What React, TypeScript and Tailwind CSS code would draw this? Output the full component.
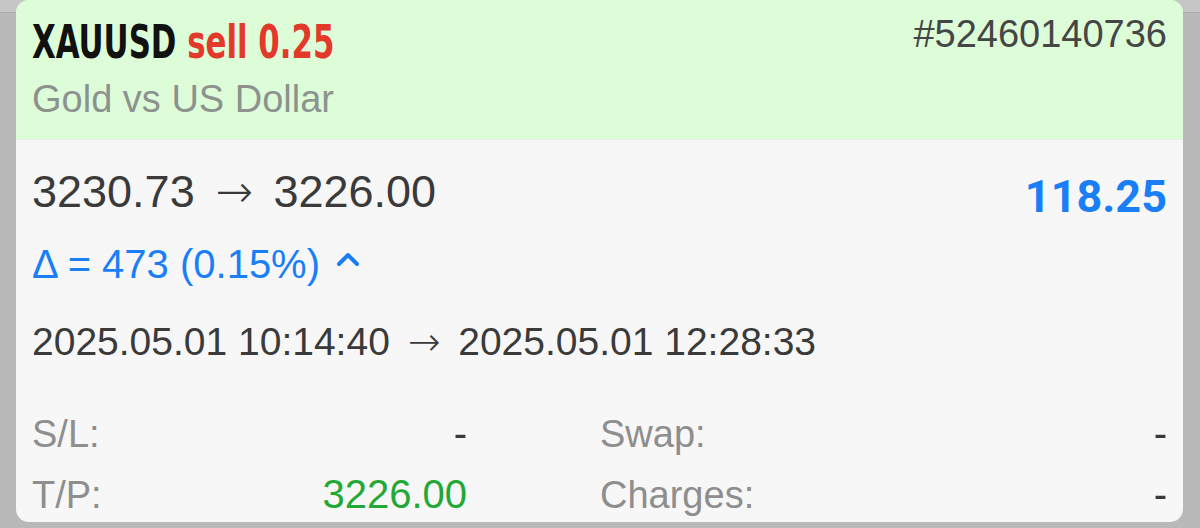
import { Fragment } from "react";

const sans = "font-['Liberation_Sans',Arial,sans-serif]";

const details = [
  [
    { label: "S/L:", value: "-", color: "text-[#3a3a3a]" },
    { label: "Swap:", value: "-", color: "text-[#3a3a3a]" },
  ],
  [
    { label: "T/P:", value: "3226.00", color: "text-[#22a834]" },
    { label: "Charges:", value: "-", color: "text-[#3a3a3a]" },
  ],
];

const Arrow = ({ className }: { className: string }) => (
  <span className={`inline-block font-['DejaVu_Sans',sans-serif] font-extralight ${className}`}>→</span>
);

const ChevronUp = () => (
  <svg width="24" height="16" viewBox="0 0 24 16" className="ml-[16px] mb-[17px]">
    <polyline
      points="3,13 12,4 21,13"
      fill="none"
      stroke="#1a7ff6"
      strokeWidth="4"
      strokeLinecap="round"
      strokeLinejoin="round"
    />
  </svg>
);

export default function App() {
  return (
    <div className="w-[1200px] h-[528px] overflow-hidden bg-[linear-gradient(to_bottom,#c6c6c6_0,#c6c6c6_12px,#a8a8a8_12px,#a8a8a8_13px,#b9b9b9_13px)] pl-[16px] pr-[17px]">
      <div className={`h-[522px] rounded-[13px] overflow-hidden bg-[#f7f7f7] ${sans}`}>
        {/* header */}
        <div className="h-[140px] bg-[#ddfdd9] border-b border-[#e6f3e4] px-[16px] flex justify-between">
          <div>
            <div className="mt-[19px] text-[46px] leading-[46px] font-['DejaVu_Sans_Condensed','DejaVu_Sans',sans-serif] font-bold whitespace-nowrap origin-left scale-x-[0.745]">
              <span className="text-[#111]">XAUUSD</span>{" "}
              <span className="text-[#e2392a]">sell 0.25</span>
            </div>
            <div className="mt-[15px] text-[38px] leading-[38px] text-[#8d928f]">Gold vs US Dollar</div>
          </div>
          <div className="mt-[15px] text-[38px] leading-[38px] text-[#454545]">#52460140736</div>
        </div>

        {/* body */}
        <div className="px-[16px]">
          <div className="pt-[29px] flex justify-between items-start">
            <div className="text-[45px] leading-[45px] text-[#3a3a3a] whitespace-nowrap">
              3230.73 <Arrow className="px-[8px]" /> 3226.00
            </div>
            <div className="mt-[5px] text-[45px] leading-[45px] font-['Roboto',sans-serif] font-bold text-[#1a7ff6]">
              118.25
            </div>
          </div>
          <div className="mt-[25px] flex items-end text-[40px] leading-[40px] text-[#1a7ff6] whitespace-nowrap">
            <span>Δ = 473 (0.15%)</span>
            <ChevronUp />
          </div>
          <div className="mt-[38px] text-[39px] leading-[39px] text-[#3a3a3a] whitespace-nowrap">
            2025.05.01 10:14:40 <Arrow className="px-[7px]" /> 2025.05.01 12:28:33
          </div>
          <div className="mt-[42px] grid grid-cols-[435px_1fr] gap-x-[133px]">
            {details.map((row, i) => (
              <Fragment key={i}>
                {row.map((cell) => (
                  <div key={cell.label} className="h-[61px] flex items-baseline justify-between leading-[61px]">
                    <span className="text-[38px] text-[#8e8e8e]">{cell.label}</span>
                    <span className={`text-[40px] ${cell.color}`}>{cell.value}</span>
                  </div>
                ))}
              </Fragment>
            ))}
          </div>
        </div>
      </div>
    </div>
  );
}
